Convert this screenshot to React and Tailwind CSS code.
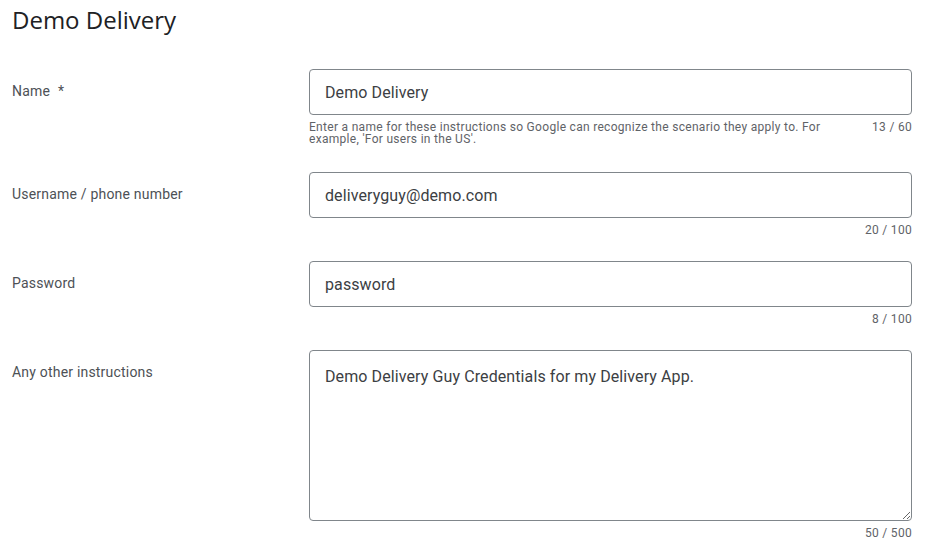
import React from 'react';

const fields = [
    { label: 'Name', required: true, value: 'Demo Delivery', count: '13 / 60', hint: "Enter a name for these instructions so Google can recognize the scenario they apply to. For example, 'For users in the US'.", pb: 'pb-[27px]' },
    { label: 'Username / phone number', value: 'deliveryguy@demo.com', count: '20 / 100', pb: 'pb-[25px]' },
    { label: 'Password', value: 'password', count: '8 / 100', pb: 'pb-[25px]' },
];

function Row({ label, required, children }) {
    return (
        <div className="flex">
            <div className="w-[309px] shrink-0 pl-3 pt-[12px] text-sm leading-5 tracking-[0.2px] text-[#4d5156]">
                {label}
                {required && <span className="ml-2">*</span>}
            </div>
            <div className="w-[603px] shrink-0">{children}</div>
        </div>
    );
}

function Helper({ hint, count }) {
    return (
        <div className="mt-[6px] flex justify-between gap-4 text-xs leading-3 tracking-[0.3px] text-[#5f6368]">
            <span className="w-[530px]">{hint}</span>
            <span className="whitespace-nowrap">{count}</span>
        </div>
    );
}

export default function App() {
    return (
        <div className="min-h-screen bg-white font-['Roboto',sans-serif]">
            <h1 className="pl-3 pt-[4px] text-[24px] leading-8 text-[#202124] font-['Open_Sans',sans-serif]">
                Demo Delivery
            </h1>

            <div className="mt-[33px]">
                {fields.map((f) => (
                    <div key={f.label} className={f.pb}>
                        <Row label={f.label} required={f.required}>
                            <input
                                readOnly
                                defaultValue={f.value}
                                className="block h-[46px] w-full rounded border border-[#80868b] pl-[15px] pr-4 text-base tracking-[0.1px] text-[#3c4043] outline-none"
                            />
                            <Helper hint={f.hint} count={f.count} />
                        </Row>
                    </div>
                ))}

                <Row label="Any other instructions">
                    <textarea
                        readOnly
                        defaultValue="Demo Delivery Guy Credentials for my Delivery App."
                        className="block h-[171px] w-full rounded border border-[#80868b] pl-[15px] pr-4 pt-[16px] text-base leading-5 tracking-[0.1px] text-[#3c4043] outline-none"
                    />
                    <Helper count="50 / 500" />
                </Row>
            </div>
        </div>
    );
}
